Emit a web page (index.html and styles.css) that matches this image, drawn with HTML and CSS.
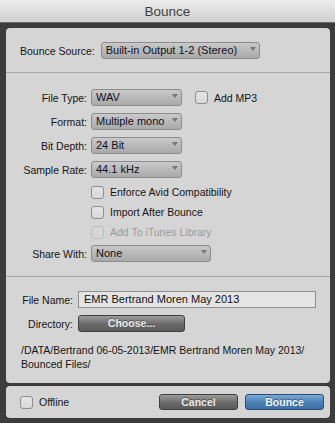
FILE: index.html
```html
<!DOCTYPE html>
<html>
<head>
<meta charset="utf-8">
<link rel="stylesheet" href="styles.css">
</head>
<body>
<div class="window">
  <div class="titlebar">Bounce</div>
  <div class="frame">
    <div class="panel main">
      <div class="section source">
        <span class="lbl-src">Bounce Source:</span>
        <div class="select w-source">Built-in Output 1-2 (Stereo)</div>
      </div>
      <div class="section options">
        <div class="row">
          <span class="lbl">File Type:</span>
          <div class="select w-small">WAV</div>
          <span class="check ml"></span><span class="ctext">Add MP3</span>
        </div>
        <div class="row gap">
          <span class="lbl">Format:</span>
          <div class="select w-small">Multiple mono</div>
        </div>
        <div class="row gap">
          <span class="lbl">Bit Depth:</span>
          <div class="select w-small">24 Bit</div>
        </div>
        <div class="row gap">
          <span class="lbl">Sample Rate:</span>
          <div class="select w-small">44.1 kHz</div>
        </div>
        <div class="checks">
          <div class="crow"><span class="check"></span><span class="ctext">Enforce Avid Compatibility</span></div>
          <div class="crow"><span class="check"></span><span class="ctext">Import After Bounce</span></div>
          <div class="crow disabled"><span class="check"></span><span class="ctext">Add To iTunes Library</span></div>
        </div>
        <div class="row share">
          <span class="lbl">Share With:</span>
          <div class="select w-share">None</div>
        </div>
      </div>
      <div class="section file">
        <div class="row">
          <span class="lbl2">File Name:</span>
          <div class="input">EMR Bertrand Moren May 2013</div>
        </div>
        <div class="row gap">
          <span class="lbl2">Directory:</span>
          <div class="btn dark w-choose">Choose...</div>
        </div>
        <div class="path">/DATA/Bertrand 06-05-2013/EMR Bertrand Moren May 2013/<br>Bounced Files/</div>
      </div>
    </div>
    <div class="panel bottom">
      <span class="check"></span><span class="ctext">Offline</span>
      <div class="spacer"></div>
      <div class="btn dark w-btn">Cancel</div>
      <div class="btn blue w-btn">Bounce</div>
    </div>
  </div>
</div>
</body>
</html>
```
FILE: styles.css
```css
html, body {
  margin: 0;
  padding: 0;
  background: #3c3c3c;
}
.window {
  width: 335px;
  height: 423px;
  font-family: "Liberation Sans", Arial, sans-serif;
  font-size: 10.5px;
  color: #141414;
  background: #3c3c3c;
  overflow: hidden;
}
.titlebar {
  height: 23px;
  box-sizing: border-box;
  background: linear-gradient(#ececec, #d0d0d0);
  border-bottom: 1px solid #6a6a6a;
  text-align: center;
  font-size: 13.5px;
  line-height: 23px;
  color: #3e3e3e;
}
.frame {
  padding: 5px 5px 5px 6px;
  display: flex;
  flex-direction: column;
  gap: 3px;
}
.panel {
  background: #d5d5d5;
  border-radius: 4px;
}
.main {
  height: 355px;
  display: flex;
  flex-direction: column;
}
.section.source {
  padding: 14px 14px 13px;
  display: flex;
  align-items: center;
}
.lbl-src {
  margin-right: 6px;
  white-space: nowrap;
}
.options {
  border-top: 1px solid #a6a6a6;
  padding: 16px 0 14px;
}
.row {
  display: flex;
  align-items: center;
  height: 17px;
}
.row.gap {
  margin-top: 7px;
}
.lbl {
  width: 81px;
  margin-right: 4px;
  text-align: right;
  white-space: nowrap;
}
.select {
  position: relative;
  height: 17px;
  box-sizing: border-box;
  border: 1px solid #8c8c8c;
  border-radius: 3px;
  background: linear-gradient(#c9c9c9, #a9a9a9);
  padding-left: 4px;
  line-height: 15px;
  font-size: 11px;
  color: #10101e;
  white-space: nowrap;
}
.select::after {
  content: "";
  position: absolute;
  right: 3px;
  top: 4px;
  border-left: 3.5px solid transparent;
  border-right: 3.5px solid transparent;
  border-top: 4px solid #777;
}
.w-source { width: 159px; }
.w-small { width: 91px; }
.w-share { width: 120px; }
.check {
  display: inline-block;
  width: 13px;
  height: 13px;
  box-sizing: border-box;
  border: 1px solid #8e8e8e;
  border-radius: 3px;
  background: linear-gradient(#e4e4e4, #d8d8d8);
  flex: none;
}
.check.ml {
  margin-left: 13px;
}
.ctext {
  margin-left: 6px;
  white-space: nowrap;
}
.checks {
  margin-top: 4px;
  padding-left: 85px;
}
.crow {
  height: 20px;
  display: flex;
  align-items: center;
}
.crow.disabled .check {
  border-color: #bdbdbd;
  background: #d6d6d6;
}
.crow.disabled .ctext {
  color: #9a9a9a;
}
.row.share {
  margin-top: 3px;
}
.file {
  border-top: 1px solid #a6a6a6;
  padding-top: 14px;
}
.lbl2 {
  width: 67px;
  margin-right: 5px;
  text-align: right;
  white-space: nowrap;
}
.input {
  width: 238px;
  height: 17px;
  box-sizing: border-box;
  border: 1px solid #8f8f8f;
  background: #e4e4e4;
  padding-left: 5px;
  line-height: 15px;
  font-size: 11px;
  color: #111;
  white-space: nowrap;
}
.btn {
  height: 17px;
  box-sizing: border-box;
  border-radius: 3px;
  text-align: center;
  font-weight: bold;
  font-size: 10.5px;
  line-height: 15px;
  color: #fff;
  text-shadow: 0 -1px 0 rgba(0,0,0,0.35);
}
.dark {
  border: 1px solid #3e3e3e;
  background: linear-gradient(#9c9c9c, #6a6a6a 55%, #5a5a5a);
  color: #ececec;
}
.blue {
  border: 1px solid #2b4c73;
  background: linear-gradient(#7aa8d6, #4a7fb5 55%, #3d6fa3);
  color: #f2f6fb;
}
.w-choose { width: 107px; }
.path {
  margin-top: 11px;
  padding-left: 15px;
  line-height: 14px;
  white-space: nowrap;
}
.bottom {
  height: 32px;
  display: flex;
  align-items: center;
  padding: 0 6px 0 14px;
}
.spacer { flex: 1; }
.w-btn {
  width: 79px;
  height: 16px;
  line-height: 14px;
  margin-left: 7px;
}
```
